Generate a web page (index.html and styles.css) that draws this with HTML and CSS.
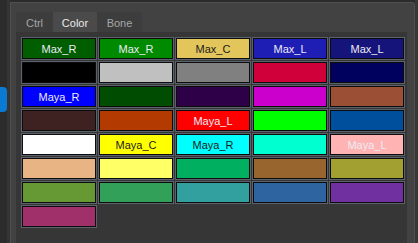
FILE: index.html
```html
<!DOCTYPE html>
<html lang="en">
<head>
    <meta charset="UTF-8">
    <meta name="viewport" content="width=device-width, initial-scale=1.0">
    <title>Color Picker</title>
    <link rel="stylesheet" href="styles.css">
</head>
<body>
    <div class="app">
        <div class="dock">
            <span class="dock-tab"></span>
        </div>

        <div class="panel">
            <div class="tabs">
                <span class="tab">Ctrl</span>
                <span class="tab active">Color</span>
                <span class="tab">Bone</span>
            </div>

            <div class="pane">
                <div class="swatches">
                    <div class="swatch light" style="background-color: #005e00">Max_R</div>
                    <div class="swatch light" style="background-color: #008a00">Max_R</div>
                    <div class="swatch dark" style="background-color: #e2c55b">Max_C</div>
                    <div class="swatch light" style="background-color: #1e1eb4">Max_L</div>
                    <div class="swatch light" style="background-color: #14147a">Max_L</div>

                    <div class="swatch" style="background-color: #000000"></div>
                    <div class="swatch" style="background-color: #c0c0c0"></div>
                    <div class="swatch" style="background-color: #808080"></div>
                    <div class="swatch" style="background-color: #d0003a"></div>
                    <div class="swatch" style="background-color: #00005e"></div>

                    <div class="swatch light" style="background-color: #0000ff">Maya_R</div>
                    <div class="swatch" style="background-color: #004c00"></div>
                    <div class="swatch" style="background-color: #2e0048"></div>
                    <div class="swatch" style="background-color: #cc00cc"></div>
                    <div class="swatch" style="background-color: #9b5035"></div>

                    <div class="swatch" style="background-color: #3e2222"></div>
                    <div class="swatch" style="background-color: #b33a00"></div>
                    <div class="swatch light" style="background-color: #ff0000">Maya_L</div>
                    <div class="swatch" style="background-color: #00ff00"></div>
                    <div class="swatch" style="background-color: #004f9c"></div>

                    <div class="swatch" style="background-color: #ffffff"></div>
                    <div class="swatch dark" style="background-color: #ffff00">Maya_C</div>
                    <div class="swatch dark" style="background-color: #00ffff">Maya_R</div>
                    <div class="swatch" style="background-color: #00ffd0"></div>
                    <div class="swatch light" style="background-color: #ffb3b3">Maya_L</div>

                    <div class="swatch" style="background-color: #e8b484"></div>
                    <div class="swatch" style="background-color: #ffff66"></div>
                    <div class="swatch" style="background-color: #00b060"></div>
                    <div class="swatch" style="background-color: #99652f"></div>
                    <div class="swatch" style="background-color: #a2a030"></div>

                    <div class="swatch" style="background-color: #669933"></div>
                    <div class="swatch" style="background-color: #33a05a"></div>
                    <div class="swatch" style="background-color: #33a0a0"></div>
                    <div class="swatch" style="background-color: #2e65a0"></div>
                    <div class="swatch" style="background-color: #7030a0"></div>

                    <div class="swatch" style="background-color: #a0306a"></div>
                </div>
            </div>
        </div>

        <div class="edge"></div>
    </div>
</body>
</html>
```

FILE: styles.css
```css
body {
    margin: 0;
    padding: 0;
    background-color: #2c2c2c;
    font-family: "Liberation Sans", Arial, sans-serif;
}

.app {
    display: flex;
    height: 243px;
    overflow: hidden;
}

/* barra lateral com o separador azul */
.dock {
    width: 7px;
    border-right: 3px solid #343434;
    background-color: #2c2c2c;
}

.dock-tab {
    display: block;
    width: 7px;
    height: 25px;
    margin-top: 87px;
    background-color: #0a7ad2;
    border-radius: 0 4px 4px 0;
}

.panel {
    display: flex;
    flex-direction: column;
    width: 391px;
    margin-top: 2px;
    padding: 9px 7px 0 5px;
    background-color: #424242;
    border: 1px solid #4f4f4f;
    border-bottom: none;
    border-radius: 0 3px 0 0;
}

.tabs {
    display: flex;
    height: 20px;
}

.tab {
    box-sizing: border-box;
    height: 20px;
    padding-top: 3px;
    line-height: 17px;
    font-size: 11px;
    text-align: center;
    color: #a6a6a6;
    background-color: #3d3d3d;
}

.tab:nth-child(1) {
    width: 37px;
}

.tab:nth-child(2) {
    width: 44px;
}

.tab:nth-child(3) {
    width: 45px;
}

.tab.active {
    color: #ececec;
    background-color: #4a4a4a;
}

.pane {
    flex: 1;
    padding: 5px 2px 0 5px;
    background-color: #363636;
}

.swatches {
    display: grid;
    grid-template-columns: repeat(5, 1fr);
    grid-auto-rows: 23px;
    gap: 1px;
}

.swatch {
    box-sizing: border-box;
    height: 23px;
    padding-top: 2px;
    line-height: 19px;
    font-size: 11px;
    text-align: center;
    border: 1px solid #5c626c;
    box-shadow: inset 0 0 0 1px #0c0c0c;
}

.swatch.light {
    color: #ececf4;
}

.swatch.dark {
    color: #1c1c1c;
}

.edge {
    flex: 1;
    background-color: #383838;
}
```
